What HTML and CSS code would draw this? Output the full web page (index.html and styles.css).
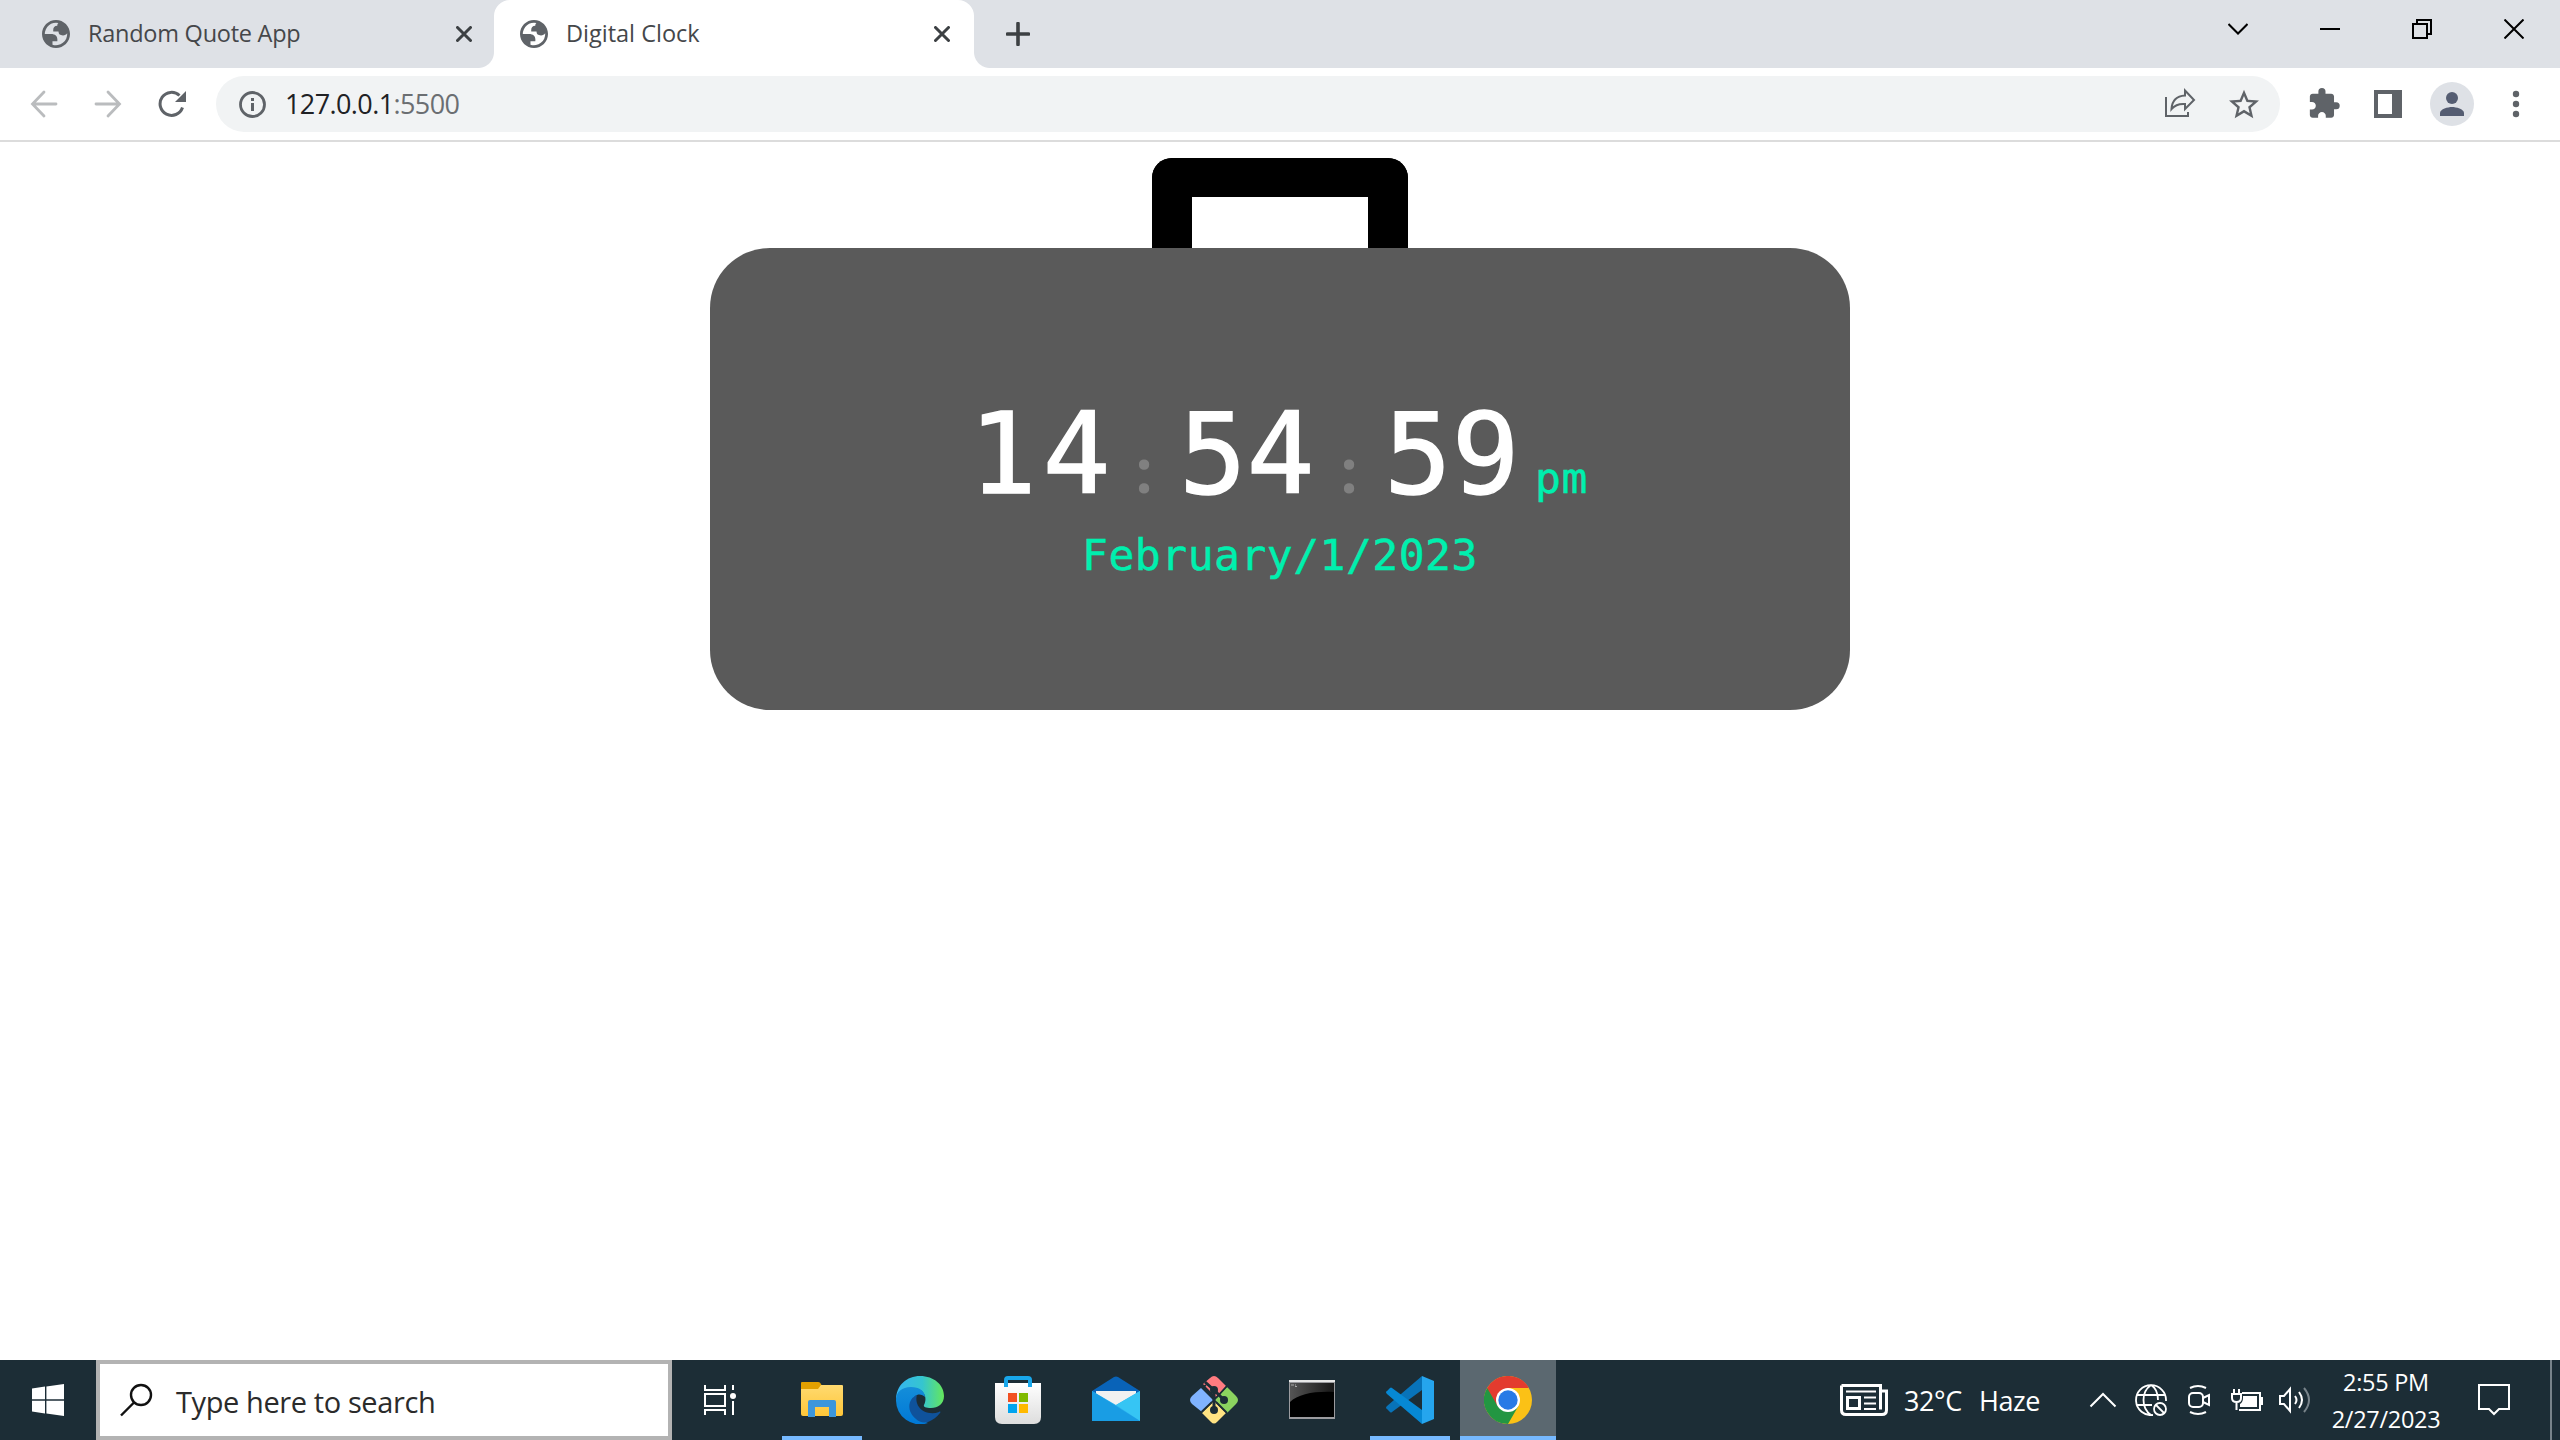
FILE: index.html
```html
<!DOCTYPE html>
<html lang="en">
<head>
<meta charset="utf-8">
<title>Digital Clock</title>
<link rel="stylesheet" href="styles.css">
</head>
<body>
<svg class="defs" width="0" height="0">
  <symbol id="globe" viewBox="2 2 20 20"><path fill="#5f6368" fill-rule="evenodd" d="M12 2C6.480 2 2 6.480 2 12s4.480 10 10 10 10-4.480 10-10S17.520 2 12 2zM4 12h4.400c3.407.022 4.922 1.730 4.543 5.127H9.488v2.470a8.004 8.004 0 0 0 10.498-8.083C19.327 12.504 18.332 13 17 13c-2.137 0-3.206-.916-3.206-2.750h-3.748c-.274-2.728.683-4.092 2.870-4.092 0-.975.327-1.597.811-1.970A8.004 8.004 0 0 0 4 12z"/></symbol>
  <symbol id="tabx" viewBox="0 0 16 16"><path d="M1.500 1.500l13 13m0-13l-13 13" stroke="#3c4043" stroke-width="3" stroke-linecap="round"/></symbol>
</svg>
<div class="screen">
  <header class="tabs">
    <div class="tab first">
      <svg class="fav"><use href="#globe"/></svg><span class="title t1">Random Quote App</span><svg class="x"><use href="#tabx"/></svg>
    </div>
    <div class="tab active">
      <svg class="fav"><use href="#globe"/></svg><span class="title t2">Digital Clock</span><svg class="x"><use href="#tabx"/></svg>
    </div>
    <svg class="plus" viewBox="0 0 24 24"><path d="M12 1.500v21M1.500 12h21" stroke="#3c4043" stroke-width="3.600" stroke-linecap="round"/></svg>
    <div class="controls">
      <span><svg width="20" height="20" viewBox="0 0 20 20"><path d="M.5 5l9.500 9.500L19.500 5"/></svg></span>
      <span><svg width="20" height="20" viewBox="0 0 20 20"><path d="M0 10h20"/></svg></span>
      <span><svg width="20" height="20" viewBox="0 0 20 20"><path d="M1 5h14v14H1zM5 5V1h14v14h-4"/></svg></span>
      <span><svg width="20" height="20" viewBox="0 0 20 20"><path d="M.5.5l19 19m0-19l-19 19"/></svg></span>
    </div>
  </header>
  <nav class="toolbar">
    <span class="btn"><svg class="faded" width="28" height="28" viewBox="0 0 28 28"><path d="M26 14H3M14 2L2.500 14 14 26"/></svg></span>
    <span class="btn"><svg class="faded" width="28" height="28" viewBox="0 0 28 28"><path d="M2 14h23M14 2l11.500 12L14 26"/></svg></span>
    <span class="btn"><svg width="28" height="28" viewBox="0 0 28 28"><path d="M24.500 17.500A11.500 11.500 0 1 1 21.500 5.500" fill="none" stroke="#5f6368" stroke-width="3"/><path d="M28 1v11H17z" fill="#5f6368"/></svg></span>
    <div class="omnibox">
      <svg width="28" height="28" viewBox="0 0 28 28"><circle cx="14.500" cy="14.500" r="12" fill="none" stroke="#5f6368" stroke-width="2.800"/><path d="M13 8h3v3h-3zM13 13h3v8h-3z" fill="#5f6368"/></svg>
      <span class="url">127.0.0.1<i>:5500</i></span>
      <span class="btn share"><svg width="32" height="32" viewBox="0 0 32 32" fill="none" stroke="#5f6368" stroke-width="2"><path d="M2 9v19h22v-4"/><path d="M21 2.500L30 12l-9 9v-5c-6-.5-10 1-13.500 5C8 13.500 12 8 21 7.500z"/></svg></span>
      <span class="btn"><svg width="30" height="30" viewBox="2 1.500 20 20"><path fill="#5f6368" d="M22 9.240l-7.190-.62L12 2 9.190 8.630 2 9.240l5.460 4.730L5.820 21 12 17.270 18.180 21l-1.630-7.030L22 9.240zM12 15.400l-3.760 2.270 1-4.280-3.320-2.880 4.380-.38L12 6.100l1.710 4.040 4.380.38-3.320 2.880 1 4.280L12 15.400z"/></svg></span>
    </div>
    <span class="btn"><svg width="32" height="32" viewBox="0.700 1 22.500 22.500"><path fill="#5f6368" d="M20.500 11H19V7c0-1.100-.9-2-2-2h-4V3.500a2.500 2.500 0 0 0-5 0V5H4c-1.100 0-1.990.9-1.990 2v3.800H3.500c1.490 0 2.700 1.210 2.700 2.700s-1.210 2.700-2.700 2.700H2V20c0 1.100.9 2 2 2h3.800v-1.500c0-1.490 1.210-2.700 2.700-2.700s2.700 1.210 2.700 2.700V22H17c1.100 0 2-.9 2-2v-4h1.500a2.500 2.500 0 0 0 0-5z"/></svg></span>
    <span class="btn"><svg width="28" height="28" viewBox="0 0 28 28"><path fill="#5f6368" fill-rule="evenodd" d="M0 0h28v28H0zM4 4h14v20H4z"/></svg></span>
    <span class="btn"><svg width="44" height="44" viewBox="0 0 44 44"><circle cx="22" cy="22" r="22" fill="#dee1e6"/><circle cx="22" cy="16" r="6" fill="#555d72"/><path d="M10 34v-3c0-4 8-6 12-6s12 2 12 6v3z" fill="#555d72"/></svg></span>
    <span class="btn"><svg width="8" height="28" viewBox="0 0 8 28" fill="#5f6368"><circle cx="4" cy="4" r="3.200"/><circle cx="4" cy="14" r="3.200"/><circle cx="4" cy="24" r="3.200"/></svg></span>
  </nav>
  <main class="page">
    <div class="handle"></div>
    <section class="clock">
      <div class="time">
        <span class="num hours">14</span><span class="colon">:</span><span class="num">54</span><span class="colon">:</span><span class="num">59</span><span class="ampm">pm</span>
      </div>
      <div class="date">February/1/2023</div>
    </section>
  </main>
  <footer class="taskbar">
    <span class="cell"><svg width="32" height="32" viewBox="0 0 32 32" fill="#fff"><path d="M0 4.500l13-1.900V15.300H0zM14.400 2.400L32 0v15.300H14.400zM0 16.700h13v12.700L0 27.600zM14.400 16.700H32V32l-17.600-2.400z"/></svg></span>
    <div class="search">
      <svg width="34" height="34" viewBox="0 0 34 34" fill="none" stroke="#111" stroke-width="2.400"><circle cx="21" cy="12" r="10"/><path d="M14 19.500L1 32.500"/></svg>
      <span>Type here to search</span>
    </div>
    <span class="cell taskview"><svg width="32" height="30" viewBox="0 0 32 30" fill="none" stroke="#fff" stroke-width="2"><path d="M1 0v5h20V0M1 9h20v12H1zM1 30v-5h20v5M29 0v5M29 16v14"/><circle cx="29" cy="11" r="3" fill="#fff" stroke="none"/></svg></span>
    <div class="apps">
      <span class="app open"><svg width="48" height="48" viewBox="0 0 48 48"><defs><linearGradient id="fo" x2="0" y2="1"><stop stop-color="#ffda70"/><stop offset="1" stop-color="#ffc638"/></linearGradient></defs><path d="M3 7q0-1 1-1h16q3 0 4 5v4H3z" fill="#e2a000"/><path d="M3 13h17l3-4h21q1 0 1 1v28q0 2-2 2H5q-2 0-2-2z" fill="url(#fo)"/><path d="M10 41V26q0-2 2-2h24q2 0 2 2v15h-7V31H17v10z" fill="#3c96dc"/></svg></span>
      <span class="app"><svg width="48" height="48" viewBox="0 0 48 48"><defs><linearGradient id="e1"><stop stop-color="#35b5f2"/><stop offset=".55" stop-color="#35c5cf"/><stop offset="1" stop-color="#65e75b"/></linearGradient><linearGradient id="e2" x2="0" y2="1"><stop stop-color="#148ed9"/><stop offset="1" stop-color="#0078d7"/></linearGradient></defs><path d="M0 24C0 9 11 0 24 0c14 0 24 9 24 20 0 8-6 12-13 12-5 0-8-1-7-3 4-7 0-17-11-17C8 12 2 17 0 24z" fill="url(#e1)"/><path d="M0 24C0 16 6 11 15 11c8 0 14 4 14 10-2-2-5-3-8-2-5 2-4 8-2 14 3 7 7 12 13 14A24 24 0 0 1 0 24z" fill="url(#e2)"/><path d="M21 19c-10 4-10 17-1 24 3 3 7 4 12 3 5-2 9-5 12-9 1-1 0-2-1-1-8 3-17 0-20-5-3-4-3-9-2-12z" fill="#0f529b"/></svg></span>
      <span class="app"><svg width="48" height="48" viewBox="0 0 48 48"><defs><linearGradient id="st" x2="0" y2="1"><stop stop-color="#fff"/><stop offset="1" stop-color="#ddd"/></linearGradient></defs><path d="M1 7h46v34q0 7-7 7H8q-7 0-7-7z" fill="url(#st)"/><path d="M12 11V4q0-2 2-2h20q2 0 2 2v7" fill="none" stroke="#18a7eb" stroke-width="4"/><path d="M14 17h9v9h-9z" fill="#f25022"/><path d="M25 17h9v9h-9z" fill="#7fba00"/><path d="M14 28h9v9h-9z" fill="#00a4ef"/><path d="M25 28h9v9h-9z" fill="#ffb900"/></svg></span>
      <span class="app"><svg width="48" height="48" viewBox="0 0 48 48"><path d="M0 15L22 1q2-1 4 0l22 14v4H0z" fill="#0963b8"/><path d="M4 15h40v5L24 32 4 20z" fill="#f1f1f1"/><path d="M0 15l24 14 24-14v30H0z" fill="#2cb1ee"/><path d="M24 29l24-14v30z" fill="#36c5f4"/><path d="M0 15l48 30H0z" fill="#199de4"/></svg></span>
      <span class="app"><svg width="48" height="48" viewBox="0 0 48 48"><path d="M24 0q2 0 4 2l8 8-10 11L13 8l7-6q2-2 4-2z" fill="#ff7b80"/><path d="M0 24q0-2 2-4l9-8 12 12-11 12L2 28q-2-2-2-4z" fill="#80b3ff"/><path d="M37 11l9 9q4 4 0 8l-9 9-12-13z" fill="#8bd35f"/><path d="M24 25l12 12-9 9q-3 3-6 0l-9-9z" fill="#ffe383"/><path d="M11.500 36L22 26M26 22l11-12M12 12l4-3M26 26l11 11" fill="none" stroke="#1c2d36" stroke-width="1.800"/><path d="M15 6l9 8 10 10M24 14v20" fill="none" stroke="#1c2d36" stroke-width="3"/><g fill="#1c2d36"><circle cx="24" cy="14" r="4"/><circle cx="34" cy="24" r="4"/><circle cx="24" cy="34" r="4"/></g></svg></span>
      <span class="app"><svg width="48" height="48" viewBox="0 0 48 48"><defs><linearGradient id="cm"><stop stop-color="#555"/><stop offset="1" stop-color="#171717"/></linearGradient></defs><path d="M1 4h46v39H1z" fill="#9b9b9f"/><path d="M1 4h46v2H1z" fill="#e8e8e8"/><path d="M2 7h44v34H2z"/><path d="M2 7h44v9C27 15 10 18 2 26z" fill="url(#cm)"/><path d="M3 9h3m1 0h1M7 10.500h2" stroke="#aaa"/></svg></span>
      <span class="app open"><svg width="48" height="48" viewBox="0 0 48 48"><path d="M36 0v14L6 36q-1 1-2 0l-3-3q-2-1 0-3z" fill="#0873b9"/><path d="M1 18q-2-2 0-3l3-3q1-1 2 0l30 22v14z" fill="#0688d4"/><path d="M36 0l12 5v38l-12 5z" fill="#25a5ee"/></svg></span>
      <span class="app open current"><svg width="48" height="48" viewBox="0 0 48 48"><circle cx="24" cy="24" r="24" fill="#fbc116"/><path d="M3.200 12A24 24 0 0 0 24 48l10.400-18L24 24z" fill="#239642"/><path d="M3.200 12A24 24 0 0 1 44.800 12H24L13.600 30z" fill="#e33b2e"/><circle cx="24" cy="24" r="12" fill="#fff"/><circle cx="24" cy="24" r="9.700" fill="#287ae6"/></svg></span>
    </div>
    <div class="tray">
      <div class="news">
        <svg width="48" height="32" viewBox="0 0 48 32" fill="none" stroke="#fff"><path d="M1.500 1.500h39v24M1.500 1.500V26q0 4.500 4.500 4.500h36q4.500 0 4.500-4.500V7H41" stroke-width="3"/><path d="M7.500 13.500h12v11h-12z" stroke-width="3"/><path d="M6 7.500h30M24 13.500h12M24 19.500h12M24 25h12" stroke-width="2.200"/></svg>
        <span class="temp">32°C</span><span class="haze">Haze</span>
      </div>
      <span class="ic"><svg width="28" height="16" viewBox="0 0 28 16" fill="none" stroke="#fff" stroke-width="2"><path d="M1.500 14.500L14 2l12.500 12.500"/></svg></span>
      <span class="ic"><svg width="32" height="32" viewBox="0 0 32 32" fill="none" stroke="#fff" stroke-width="1.800"><path d="M18 31A15 15 0 1 1 31 17M16 1C6 8 6 24 16 31M16 1c5 3 7 9 7 15M2 11h28M2 21h15"/><circle cx="25" cy="25" r="6"/><path d="M21 21l8 8"/></svg></span>
      <span class="ic"><svg width="24" height="32" viewBox="0 0 24 32" fill="none" stroke="#fff" stroke-width="2"><rect x="2" y="9" width="14" height="14" rx="4"/><path d="M16 14l6-3v10l-6-3M3 4q8-4 16 0M3 28q8 4 16 0"/></svg></span>
      <span class="ic"><svg width="32" height="24" viewBox="0 0 32 24" fill="none" stroke="#fff" stroke-width="2"><path d="M11 5h18v17H8M30 10h1v6h-1M3 1v5M8 1v5M1 6h9v4q0 4-4.500 4T1 10zM5.500 14v8"/><path d="M12 8h14v11H9v-3q3-2 3-6z" fill="#fff" stroke="none"/></svg></span>
      <span class="ic"><svg width="32" height="28" viewBox="0 0 32 28" fill="none" stroke="#fff" stroke-width="2"><path d="M1 10h4l6-7v22l-6-7H1zM16 10q3 4 0 8M20 6q6 8 0 16"/><path d="M25 2q10 12 0 24" stroke="#78838a"/></svg></span>
      <div class="when"><span>2:55 PM</span><span>2/27/2023</span></div>
      <span class="note"><svg width="32" height="32" viewBox="0 0 32 32" fill="none" stroke="#fff" stroke-width="2"><path d="M1 1h30v24H21l-5 5-5-5H1z"/></svg></span>
      <span class="peek"></span>
    </div>
  </footer>
</div>
</body>
</html>
```
FILE: styles.css
```css
* { box-sizing: border-box; }
body { margin: 0; font-family: "Open Sans", "Noto Sans", sans-serif; background: #fff; }
svg { display: block; flex: none; }
.defs { position: absolute; }
.screen { width: 2560px; height: 1440px; display: flex; flex-direction: column; overflow: hidden; }
span { white-space: nowrap; }

.tabs { height: 68px; flex: none; display: flex; background: #dee1e6; }
.tab { display: flex; align-items: center; height: 68px; }
.tab.first { width: 494px; padding: 0 22px 0 42px; }
.tab.active { width: 480px; padding: 0 24px 0 26px; background: #fff; border-radius: 16px 16px 0 0; position: relative; }
.tab.active::before, .tab.active::after { content: ""; position: absolute; bottom: 0; width: 16px; height: 16px; }
.tab.active::before { left: -16px; background: radial-gradient(circle at 0 0, #dee1e6 15.5px, #fff 16.5px); }
.tab.active::after { right: -16px; background: radial-gradient(circle at 100% 0, #dee1e6 15.5px, #fff 16.5px); }
.fav { width: 28px; height: 28px; }
.title { flex: 1; margin-left: 18px; font-size: 23.5px; line-height: 32px; padding-bottom: 2px; color: #45474a; }
.t1 { letter-spacing: -.25px; }
.x { width: 16px; height: 16px; }
.plus { width: 24px; height: 24px; margin: 22px 0 0 32px; }
.controls { margin-left: auto; display: flex; height: 58px; }
.controls span { width: 92px; display: flex; align-items: center; justify-content: center; }
.controls path { fill: none; stroke: #000; stroke-width: 2; }

.toolbar { height: 74px; flex: none; display: flex; align-items: center; padding: 0 12px; border-bottom: 2px solid #dcdcdc; }
.btn { width: 64px; flex: none; display: flex; align-items: center; justify-content: center; }
.faded path { fill: none; stroke: #babcbe; stroke-width: 2.8; stroke-linecap: round; }
.omnibox { flex: 1; height: 56px; margin: 0 12px; border-radius: 28px; background: #f1f3f4; display: flex; align-items: center; padding: 0 4px 0 22px; }
.url { margin-left: 19px; font-size: 27px; line-height: 36px; letter-spacing: -.6px; color: #202124; }
.url i { font-style: normal; color: #6b6e72; }
.share { margin-left: auto; }

.page { flex: 1; display: flex; flex-direction: column; align-items: center; padding-top: 16px; }
.handle { width: 256px; height: 90px; border: 40px solid #000; border-top-width: 39px; border-bottom: 0; border-radius: 20px 20px 0 0; }
.clock { width: 1140px; height: 462px; border-radius: 60px; background: #5a5a5a; display: flex; flex-direction: column; align-items: center; padding-top: 142px; font-family: "DejaVu Sans Mono", monospace; }
.time { width: 610px; height: 130px; display: flex; align-items: baseline; line-height: 130px; }
.time span { flex: none; }
.num { width: 142px; margin-left: -1px; font-size: 112.5px; letter-spacing: 0; color: #fff; -webkit-text-stroke: 1.5px #fff; }
.hours { width: 147px; margin-left: -6px; letter-spacing: 6px; }
.colon { width: 64px; padding-right: 8px; text-align: center; font-family: "Open Sans", sans-serif; font-weight: 700; font-size: 60px; color: #808080; }
.ampm { margin-left: 9px; font-size: 43px; letter-spacing: .5px; color: #00efae; -webkit-text-stroke: .5px #00efae; }
.date { height: 60px; line-height: 60px; margin-top: 5px; font-size: 43px; letter-spacing: .5px; color: #00efae; -webkit-text-stroke: .5px #00efae; }

.taskbar { height: 80px; flex: none; display: flex; background: #1c2d36; color: #fff; }
.cell { width: 96px; display: flex; align-items: center; justify-content: center; }
.search { width: 576px; border: 4px solid #b3b3b3; background: #fff; display: flex; align-items: center; padding-left: 20px; color: #2b2b2b; font-size: 29px; letter-spacing: -.4px; }
.search span { margin: 2px 0 0 22px; }
.taskview { margin-right: 6px; }
.apps { display: flex; gap: 2px; }
.app { width: 96px; display: flex; align-items: center; justify-content: center; background: no-repeat center bottom / 80px 4px; }
.app.open { background-image: linear-gradient(#76b9ff, #76b9ff); }
.app.current { background-size: 96px 4px; background-color: #5b6870; }
.tray { margin-left: auto; display: flex; align-items: center; }
.news { width: 239px; display: flex; align-items: center; font-size: 27px; letter-spacing: -.4px; }
.temp { width: 75px; margin-left: 16px; }
.ic { width: 48px; display: flex; justify-content: center; }
.when { width: 134px; display: flex; flex-direction: column; align-items: center; font-size: 23.5px; line-height: 37px; letter-spacing: -.3px; padding: 2px 0 0; }
.note { width: 82px; display: flex; justify-content: center; }
.peek { width: 2px; height: 80px; margin: 0 8px 0 15px; background: #78838a; }
```
